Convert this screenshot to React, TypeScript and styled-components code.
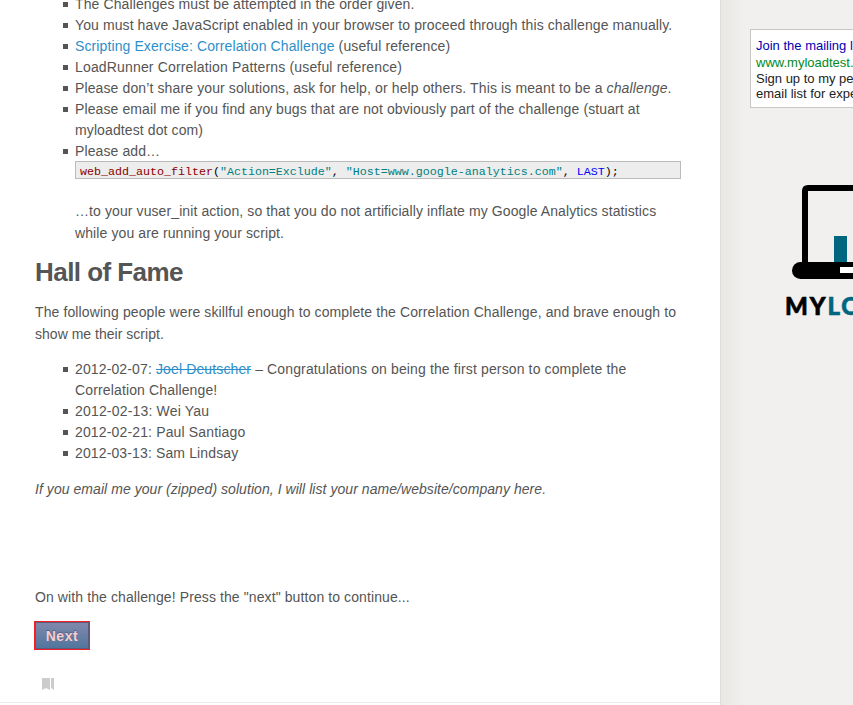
import React from "react";
import styled, { createGlobalStyle } from "styled-components";

const Global = createGlobalStyle`
  html, body { margin: 0; background: #f1f0ee; }
  body { overflow: hidden; }
`;

const Page = styled.div`
  display: flex;
  width: 853px;
  height: 705px;
  overflow: hidden;
  font-family: "Liberation Sans", Arial, sans-serif;
  font-size: 14px;
  line-height: 21px;
  color: #555;
`;

const Main = styled.main`
  box-sizing: border-box;
  flex: 0 0 720px;
  width: 720px;
  min-width: 0;
  height: 703px;
  padding: 0 35px;
  background: #fff;
  border-bottom: 1px solid #ececec;
  box-shadow: 0 3px 0 #fff;
`;

const List = styled.ul<{ $top: number }>`
  margin: ${(p) => p.$top}px 0 0;
  padding: 0 0 0 40px;
  list-style: none;
`;

const Item = styled.li`
  display: grid;
  grid-template-columns: 12px 1fr;
  margin-left: -12px;
  white-space: nowrap;

  &::before {
    content: "";
    width: 5px;
    height: 5px;
    margin-top: 8px;
    background: #555;
  }
`;

const Line = styled.span<{ $track?: number }>`
  display: block;
  letter-spacing: ${(p) => p.$track ?? 0.107}px;
`;

const Link = styled.a<{ $struck?: boolean }>`
  color: #2d8fc9;
  text-decoration: ${(p) => (p.$struck ? "line-through" : "none")};
`;

const Code = styled.pre`
  box-sizing: border-box;
  width: 606px;
  height: 18px;
  margin: -1px 0 0;
  padding: 2px 4px 0;
  border: 1px solid #bbb;
  background: #ededed;
  color: #000;
  font: 11.67px/17px "Liberation Mono", "Courier New", monospace;
`;

const Token = styled.span<{ $kind: "fn" | "str" | "const" }>`
  color: ${(p) => ({ fn: "#8b0000", str: "#008080", const: "#0000ff" })[p.$kind]};
`;

const Text = styled.p<{ $top: number; $italic?: boolean }>`
  margin: ${(p) => p.$top}px 0 0;
  line-height: 22px;
  white-space: nowrap;
  font-style: ${(p) => (p.$italic ? "italic" : "normal")};
`;

const Heading = styled.h2`
  margin: 12px 0 0;
  font-size: 26px;
  line-height: 32px;
  font-weight: bold;
  letter-spacing: -0.55px;
`;

const NextButton = styled.button`
  display: block;
  box-sizing: border-box;
  width: 56px;
  height: 29px;
  margin: 13px 0 0 -1px;
  padding: 2px 0 0;
  border: 1px solid #ee2024;
  box-shadow: inset 0 0 0 1px #62587c;
  background: linear-gradient(#848aac, #4d749d) border-box;
  color: #f8cfcf;
  text-shadow: 0 -1px 1px #555c80;
  font: bold 14px/25px "Liberation Sans", Arial, sans-serif;
  letter-spacing: 0.6px;
`;

const Bookmark = styled.svg`
  display: block;
  margin: 28px 0 0 7px;
`;

const Sidebar = styled.aside`
  box-sizing: border-box;
  flex: 0 0 133px;
  padding: 29px 0 0 29px;
  overflow: hidden;
  border-left: 1px solid #deddda;
  background: linear-gradient(90deg, #e8e8e5 0, #ecebe9 10px, #f1f0ee 24px);
`;

const Ad = styled.div`
  box-sizing: border-box;
  width: 240px;
  height: 79px;
  padding: 8px 5px;
  border: 1px solid #c8c6c3;
  background: #fff;
  font-size: 13px;
  line-height: 15px;
  white-space: nowrap;
`;

const AdLine = styled.div<{ $color?: string; $height?: number }>`
  color: ${(p) => p.$color ?? "#222"};
  line-height: ${(p) => p.$height ?? 15}px;
`;

const Logo = styled.div`
  margin: 76px 0 0 35px;
`;

const Laptop = styled.svg`
  display: block;
`;

const Wordmark = styled.div`
  margin-top: 10px;
  font: 900 24px/32px Lato, sans-serif;
  letter-spacing: 1.9px;
  color: #000;
  -webkit-text-stroke: 0.6px currentColor;
  white-space: nowrap;
`;

const Teal = styled.span`
  color: #006680;
`;

export default function App() {
  return (
    <>
      <Global />
      <Page>
        <Main>
          <List $top={-6}>
            <Item><Line>The Challenges must be attempted in the order given.</Line></Item>
            <Item><Line $track={0.097}>You must have JavaScript enabled in your browser to proceed through this challenge manually.</Line></Item>
            <Item><Line><Link>Scripting Exercise: Correlation Challenge</Link> (useful reference)</Line></Item>
            <Item><Line $track={0.16}>LoadRunner Correlation Patterns (useful reference)</Line></Item>
            <Item><Line $track={0.12}>Please don’t share your solutions, ask for help, or help others. This is meant to be a <em>challenge</em>.</Line></Item>
            <Item>
              <div>
                <Line>Please email me if you find any bugs that are not obviously part of the challenge (stuart at</Line>
                <Line>myloadtest dot com)</Line>
              </div>
            </Item>
            <Item>
              <div>
                <Line>Please add…</Line>
                <Code>
                  <Token $kind="fn">web_add_auto_filter</Token>(<Token $kind="str">"Action=Exclude"</Token>, <Token $kind="str">"Host=www.google-analytics.com"</Token>, <Token $kind="const">LAST</Token>);
                </Code>
                <Text $top={21}>
                  <Line $track={0.095}>…to your vuser_init action, so that you do not artificially inflate my Google Analytics statistics</Line>
                  <Line>while you are running your script.</Line>
                </Text>
              </div>
            </Item>
          </List>
          <Heading>Hall of Fame</Heading>
          <Text $top={13}>
            <Line>The following people were skillful enough to complete the Correlation Challenge, and brave enough to</Line>
            <Line $track={0.02}>show me their script.</Line>
          </Text>
          <List $top={14}>
            <Item>
              <div>
                <Line $track={0.13}>2012-02-07: <Link $struck>Joel Deutscher</Link> – Congratulations on being the first person to complete the</Line>
                <Line $track={0.14}>Correlation Challenge!</Line>
              </div>
            </Item>
            <Item><Line $track={0.18}>2012-02-13: Wei Yau</Line></Item>
            <Item><Line $track={0.15}>2012-02-21: Paul Santiago</Line></Item>
            <Item><Line $track={0.13}>2012-03-13: Sam Lindsay</Line></Item>
          </List>
          <Text $top={14} $italic>
            <Line $track={0.055}>If you email me your (zipped) solution, I will list your name/website/company here.</Line>
          </Text>
          <Text $top={86}>
            <Line $track={0.1}>On with the challenge! Press the "next" button to continue...</Line>
          </Text>
          <NextButton>Next</NextButton>
          <Bookmark width="13" height="12" viewBox="0 0 13 12">
            <path d="M0 0h8v12l-4-2-4 2zM9 0h3v12l-3-2z" fill="#ccc" />
          </Bookmark>
        </Main>
        <Sidebar>
          <Ad>
            <AdLine $color="#0000b3">Join the mailing list</AdLine>
            <AdLine $color="#008a1e" $height={19}>www.myloadtest.com</AdLine>
            <AdLine $height={14}>Sign up to my performance testing</AdLine>
            <AdLine>email list for expert tips</AdLine>
          </Ad>
          <Logo>
            <Laptop width="140" height="96" viewBox="0 0 140 96">
              <path d="M20 80V7Q20 4 23 4H140" fill="none" stroke="#000" strokeWidth="6" />
              <rect x="49" y="52" width="13" height="27" fill="#006680" />
              <path d="M15.500 78H140v17H15.500a8.500 8.500 0 0 1 0-17z" fill="#000" />
              <rect x="55" y="83" width="30" height="6" fill="#fff" />
            </Laptop>
            <Wordmark>MY<Teal>LOAD</Teal>TEST</Wordmark>
          </Logo>
        </Sidebar>
      </Page>
    </>
  );
}
